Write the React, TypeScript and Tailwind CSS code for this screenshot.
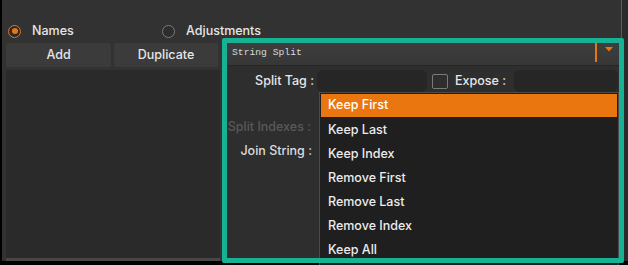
import React from "react";

const items = ["Keep First", "Keep Last", "Keep Index", "Remove First", "Remove Last", "Remove Index", "Keep All"];

export default function App() {
  return (
    <div
      className="relative w-[628px] h-[265px] bg-black overflow-hidden text-[12.5px] text-[#e6e6e6]"
      style={{ fontFamily: "Inter, 'Liberation Sans', sans-serif" }}
    >
      <div className="absolute left-[2px] top-0 w-[626px] h-[261px] bg-[#2b2b2b] flex">
        <div className="w-[620px] h-full bg-[#323232] border-r border-[#5a5a5a] flex flex-col pl-[4px]">
          {/* radio row */}
          <div className="h-[42px] pt-[20px] flex items-center">
            <div className="flex items-center w-[156px] pl-[2px]">
              <span className="w-[13px] h-[13px] rounded-full border-[1.5px] border-[#e8760f] bg-[#2a2a2a] flex items-center justify-center">
                <span className="w-[6px] h-[6px] rounded-full bg-[#e8760f]" />
              </span>
              <span className="ml-[11px] font-medium">Names</span>
            </div>
            <div className="flex items-center">
              <span className="w-[13px] h-[13px] rounded-full border-[1.5px] border-[#7a7a7a] bg-[#2d2d2d]" />
              <span className="ml-[11px] font-medium">Adjustments</span>
            </div>
          </div>
          <div className="flex flex-1 min-h-0">
            {/* left column */}
            <div className="w-[214px] flex flex-col pt-[1px]">
              <div className="flex gap-[3px]">
                <div className="w-[105px] h-[24px] bg-[#3b3b3b] rounded-[2px] flex items-center justify-center font-medium">Add</div>
                <div className="w-[104px] h-[24px] bg-[#3b3b3b] rounded-[2px] flex items-center justify-center font-medium">Duplicate</div>
              </div>
              <div className="mt-[3px] flex-1 bg-[#2a2a2a] border-b-[3px] border-[#474747]" />
            </div>
            {/* right column */}
            <div className="relative ml-[6px] w-[394px] flex flex-col pt-[1px] bg-[#2e2e2e]">
              <div className="h-[23px] bg-gradient-to-b from-[#3e3e3e] to-[#373737] border-b border-[#262626] flex items-center pl-[6px]">
                <span
                  className="text-[9.7px] text-[#d8d8d8] flex-1 -mt-[2px]"
                  style={{ fontFamily: "'Liberation Mono', monospace" }}
                >
                  String Split
                </span>
                <span className="w-[2px] h-[19px] bg-[#e8760f] -mt-[4px]" />
                <svg width="8" height="5" viewBox="0 0 8 5" className="ml-[8px] mr-[7px] -mt-[10px]">
                  <path d="M0 0 L8 0 L4 4.5 Z" fill="#e8760f" />
                </svg>
              </div>
              <div className="mt-[4px] flex items-center h-[22px]">
                <span className="w-[91px] text-right font-medium pr-[3px] whitespace-nowrap">Split Tag :</span>
                <div className="w-[110px] h-[22px] rounded-[6px] bg-[#262626]" />
                <span className="ml-[5px] w-[16px] h-[15px] rounded-[2px] border border-[#7a7a7a] bg-[#2e2e2e]" />
                <span className="ml-[7px] font-medium whitespace-nowrap">Expose :</span>
                <div className="ml-[8px] w-[104px] h-[22px] rounded-[6px] bg-[#262626]" />
              </div>
              <div className="mt-[23px] h-[24px] flex items-center">
                <span className="w-[85px] text-right font-medium text-[#595959] whitespace-nowrap">Split Indexes :</span>
              </div>
              <div className="h-[24px] flex items-center">
                <span className="w-[86px] text-right font-medium text-[#dcdcdc] whitespace-nowrap">Join String :</span>
              </div>
              {/* dropdown menu */}
              <div className="absolute left-[93px] top-[50px] w-[300px] h-[180px] bg-[#1f1f1f] border border-[#4a4a4a] p-[1px]">
                {items.map((it, i) => (
                  <div
                    key={it}
                    className={
                      i === 0
                        ? "h-[23px] mb-[1px] bg-[#e9760f] flex items-center pl-[7px] font-medium text-white"
                        : "h-[24px] flex items-center pl-[7px] font-medium text-[#ececec]"
                    }
                  >
                    {it}
                  </div>
                ))}
              </div>
            </div>
          </div>
        </div>
      </div>
      {/* annotation highlight */}
      <div className="absolute left-[222px] top-[38px] w-[402px] h-[225px] border-[5px] border-[#17b294] rounded-[2px]" />
    </div>
  );
}
